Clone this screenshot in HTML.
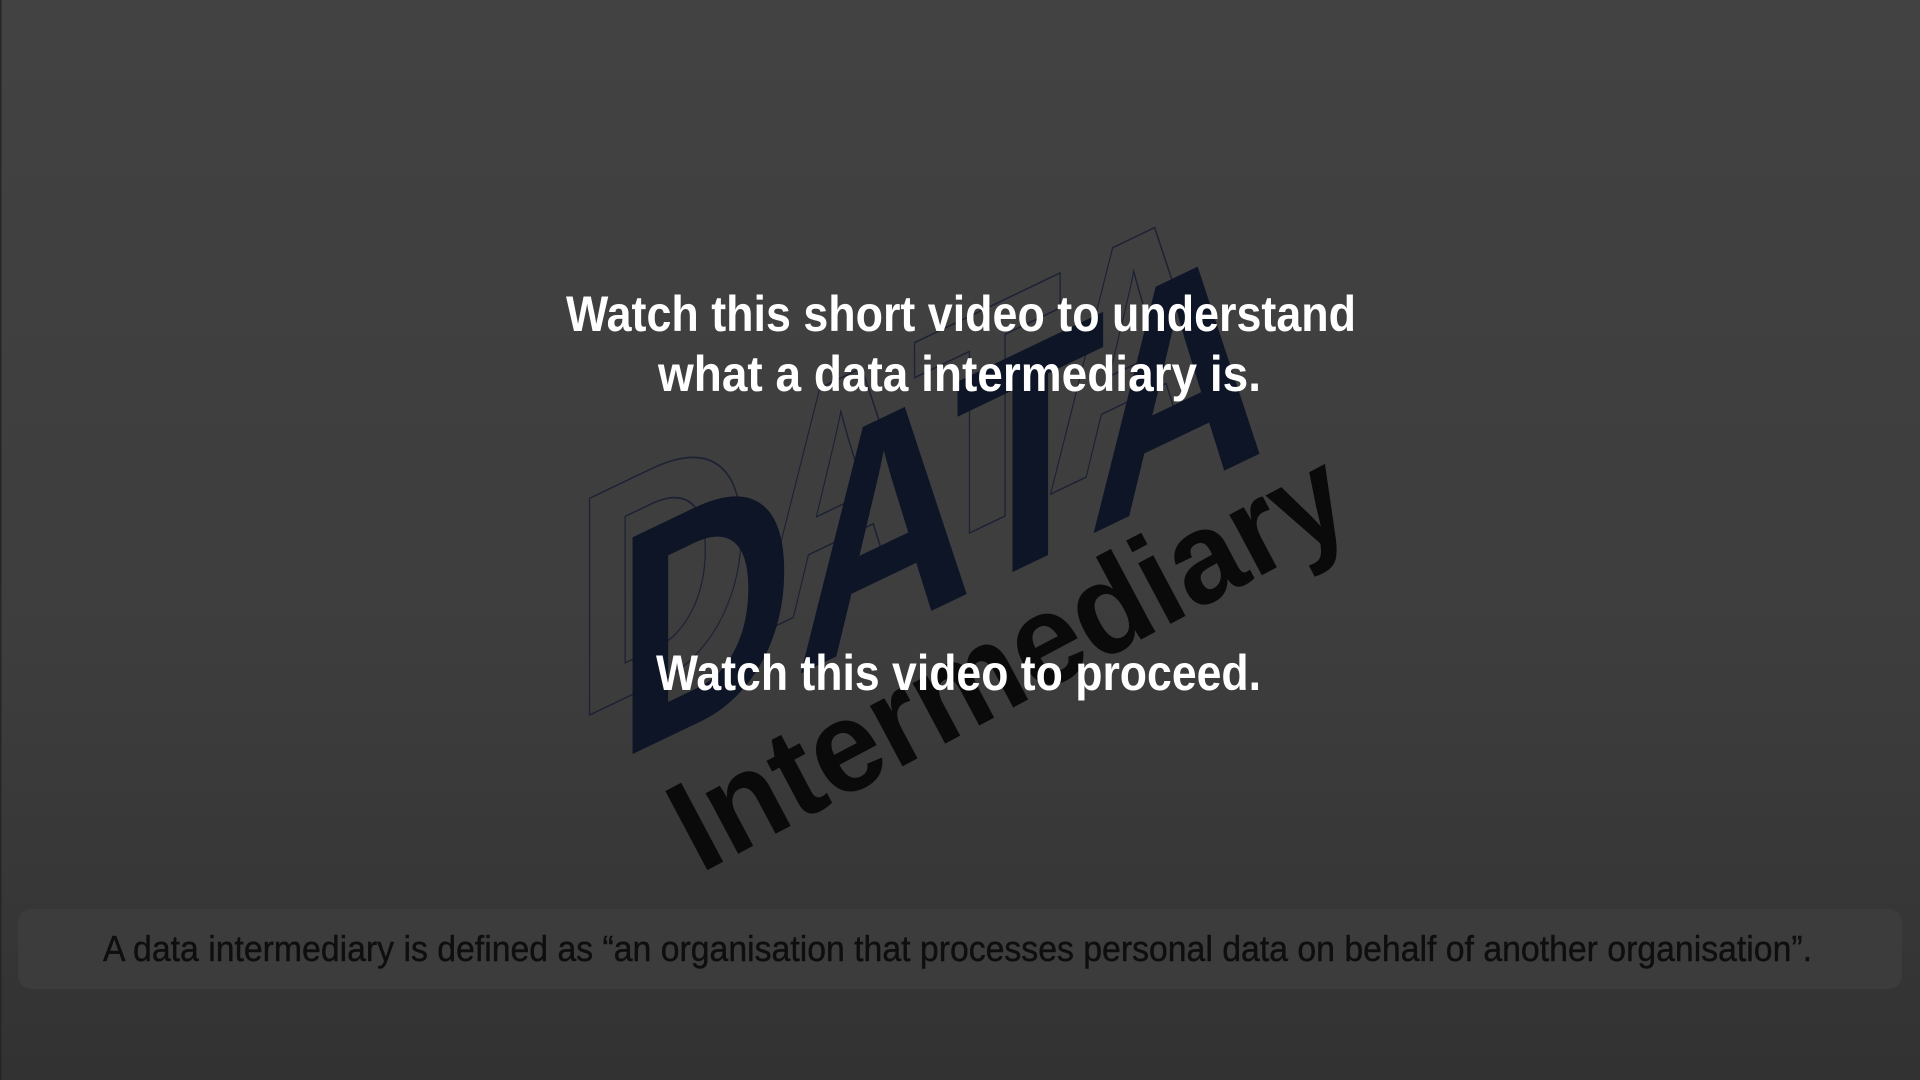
<!DOCTYPE html>
<html><head><meta charset="utf-8"><style>
html,body{margin:0;padding:0;width:1920px;height:1080px;overflow:hidden;background:#3d3d3d}
svg{display:block}
</style></head><body>
<svg width="1920" height="1080" viewBox="0 0 1920 1080" xmlns="http://www.w3.org/2000/svg">
<defs>
<linearGradient id="bg" x1="0" y1="0" x2="0" y2="1">
<stop offset="0" stop-color="#424242"/>
<stop offset="0.6" stop-color="#3d3d3d"/>
<stop offset="1" stop-color="#323232"/>
</linearGradient>
</defs>
<rect width="1920" height="1080" fill="url(#bg)"/>
<rect x="0" y="0" width="1.5" height="1080" fill="#262626"/>

<g transform="translate(573,723) skewY(-25.6)">
<text x="0" y="0" font-family="Liberation Sans Narrow, Liberation Sans, sans-serif" font-weight="bold" font-size="315" fill="none" stroke="#1c2233" stroke-width="1.6" textLength="650" lengthAdjust="spacingAndGlyphs">DATA</text>
</g>
<g transform="translate(616,762) skewY(-25.6)">
<text x="0" y="0" font-family="Liberation Sans Narrow, Liberation Sans, sans-serif" font-weight="bold" font-size="315" fill="#0d1526" textLength="650" lengthAdjust="spacingAndGlyphs">DATA</text>
</g>

<g transform="translate(700,874) rotate(-28)">
<text x="0" y="0" font-family="Liberation Sans, sans-serif" font-weight="bold" font-size="130" fill="#0a0a0a" textLength="745" lengthAdjust="spacingAndGlyphs">Intermediary</text>
</g>

<g font-family="Liberation Sans Narrow, Liberation Sans, sans-serif" font-weight="bold" fill="#ffffff" font-size="50">
<text x="566" y="331" textLength="790" lengthAdjust="spacingAndGlyphs">Watch this short video to understand</text>
<text x="658" y="391" textLength="603" lengthAdjust="spacingAndGlyphs">what a data intermediary is.</text>
<text x="656" y="690" textLength="605" lengthAdjust="spacingAndGlyphs">Watch this video to proceed.</text>
</g>

<rect x="18" y="909" width="1884" height="80" rx="14" fill="#3e3e3e" opacity="0.8"/>
<text x="103" y="961" font-family="Liberation Sans Narrow, Liberation Sans, sans-serif" font-size="36" fill="#0e0e0e" stroke="#0e0e0e" stroke-width="0.4" textLength="1709" lengthAdjust="spacingAndGlyphs">A data intermediary is defined as “an organisation that processes personal data on behalf of another organisation”.</text>
</svg>
</body></html>
